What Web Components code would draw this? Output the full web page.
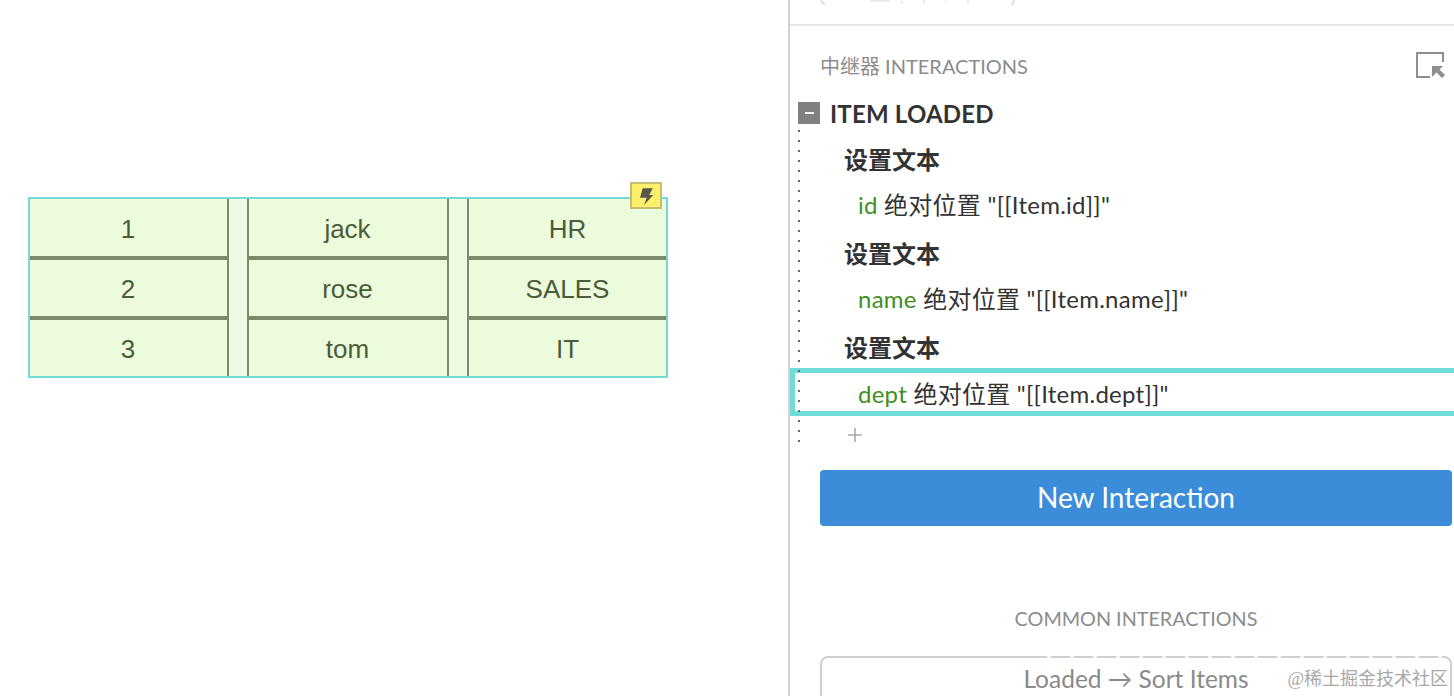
<!DOCTYPE html>
<html><head><meta charset="utf-8"><style>
html,body{margin:0;padding:0;background:#fff;width:1454px;height:696px;overflow:hidden}
body{display:flex;font-family:Lato,"Noto Sans CJK SC",sans-serif}
</style></head><body>
<canvas-pane>
  <repeater-grid>
    <grid-spacer style="grid-column:2"></grid-spacer><grid-spacer style="grid-column:4"></grid-spacer>
    <grid-cell>1</grid-cell><grid-cell>jack</grid-cell><grid-cell end>HR</grid-cell>
    <grid-cell>2</grid-cell><grid-cell>rose</grid-cell><grid-cell end>SALES</grid-cell>
    <grid-cell last>3</grid-cell><grid-cell last>tom</grid-cell><grid-cell last end>IT</grid-cell>
  </repeater-grid>
</canvas-pane>
<side-panel>
  <panel-top></panel-top>
  <panel-heading>中继器 INTERACTIONS</panel-heading>
  <event-title>ITEM LOADED</event-title>
  <tree-body>
    <tree-action>设置文本</tree-action>
    <tree-target><span slot="name">id</span> 绝对位置 "[[Item.id]]"</tree-target>
    <tree-action>设置文本</tree-action>
    <tree-target><span slot="name">name</span> 绝对位置 "[[Item.name]]"</tree-target>
    <tree-action>设置文本</tree-action>
    <tree-target selected><span slot="name">dept</span> 绝对位置 "[[Item.dept]]"</tree-target>
    <tree-add></tree-add>
  </tree-body>
  <primary-button>New Interaction</primary-button>
  <common-label>COMMON INTERACTIONS</common-label>
  <outline-button>Loaded → Sort Items<span slot="mark">@稀土掘金技术社区</span></outline-button>
</side-panel>
<script>
function def(name, css, html){
  customElements.define(name, class extends HTMLElement{
    constructor(){super();const s=this.attachShadow({mode:'open'});s.innerHTML='<style>'+css+'</style>'+html;}
  });
}
def('canvas-pane',`:host{display:block;width:788px;height:696px;flex:none;padding:197px 0 0 28px;box-sizing:border-box}`,`<slot></slot>`);
def('repeater-grid',`:host{display:block;position:relative;width:640px;height:181px;box-sizing:border-box;border:2px solid #74dcd5;background:#ebfbdb}
.g{display:grid;grid-template-columns:197px 22px 198px 22px 197px;grid-template-rows:61px 60px 56px;height:100%}
.badge{position:absolute;top:-17px;left:600px;width:32px;height:27px;display:block}`,
`<div class="g"><slot></slot></div><svg class="badge" viewBox="0 0 32 27"><rect x="1" y="1" width="30" height="25" fill="#fdf06a" stroke="#c4bd72" stroke-width="2"/><path d="M12.7 6.3H22.7L19.3 13H23.3L14 23L16.7 15.7H10Z" fill="#56564a"/></svg>`);
def('grid-cell',`:host{display:flex;align-items:center;justify-content:center;font:26px "Liberation Sans",sans-serif;color:#4a5c3a;box-sizing:border-box;border-bottom:4px solid #7b8a69;padding:3px 1px 0 0}
:host([last]){border-bottom:0}:host([end]){padding-right:0}`,`<slot></slot>`);
def('grid-spacer',`:host{display:block;grid-row:1/4;box-sizing:border-box;border-left:2px solid #7b8a69;border-right:2px solid #7b8a69;background:#eef9e2}`,``);
def('side-panel',`:host{display:flex;flex-direction:column;flex:1;border-left:2px solid #d2d2d2;height:696px;box-sizing:border-box;min-width:0;overflow:hidden}`,`<slot></slot>`);
def('panel-top',`:host{display:block;height:26px;box-sizing:border-box;border-bottom:2px solid #e6e6e6;flex:none}svg{display:block}`,
`<svg width="664" height="6" viewBox="0 0 664 6" fill="none" stroke="#dedede" stroke-width="2"><path d="M31 0Q32 3 35 5M224 0Q224 3 221 5"/><path d="M80 1H100M112 1V4M134 0V4M156 1V3M178 0V4" stroke="#eaeaea"/></svg>`);
def('panel-heading',`:host{display:flex;align-items:center;justify-content:space-between;flex:none;height:26px;margin-top:26px;padding:0 8px 0 30px;color:#8c8c8c;font-size:20px}
svg{display:block}`,
`<span><slot></slot></span><svg width="30" height="26" viewBox="0 0 30 26"><path d="M27 10V1H1V25H14" fill="none" stroke="#8f8f8f" stroke-width="2"/><path d="M16 14H27L23.5 17.5L29 23L26 26L20.5 20.5L16 25Z" fill="#8f8f8f"/></svg>`);
def('event-title',`:host{display:flex;align-items:center;gap:10px;flex:none;height:22px;margin-top:24px;padding-left:8px;color:#333;font-weight:700;font-size:24px;letter-spacing:.2px}
i{display:flex;align-items:center;justify-content:center;width:22px;height:22px;background:#808080}i::after{content:"";width:9px;height:2px;background:#fff}`,`<i></i><slot></slot>`);
def('tree-body',`:host{display:block;position:relative;flex:none;height:327px;box-sizing:border-box;padding-top:13px;color:#333}
:host::before{content:"";position:absolute;left:8px;top:6px;width:2px;height:315px;background:linear-gradient(#666 2px,transparent 2px) 0 0/2px 10px repeat-y}`,`<slot></slot>`);
def('tree-action',`:host{display:flex;align-items:center;box-sizing:border-box;height:46px;padding:0 0 4px 54px;font-weight:700;font-size:24px;color:#333}`,`<slot></slot>`);
def('tree-target',`:host{display:block;box-sizing:border-box;height:48px;line-height:44px;padding-left:68px;font-size:24px;letter-spacing:.25px;color:#333;white-space:pre}
:host([selected]){margin:-3px -12px 3px 0;border:5px solid #6edcd8;padding-left:63px;line-height:42px}
::slotted([slot=name]){color:#3f8f1f}`,`<slot name="name"></slot><slot></slot>`);
def('tree-add',`:host{display:flex;align-items:center;height:32px;padding-left:58px}svg{display:block}`,`<svg width="14" height="14" viewBox="0 0 14 14"><path d="M7 0V14M0 7H14" stroke="#aaa" stroke-width="1.6" fill="none"/></svg>`);
def('primary-button',`:host{display:flex;align-items:center;justify-content:center;flex:none;box-sizing:border-box;height:56px;margin:19px 2px 0 30px;padding-bottom:2px;border-radius:4px;background:#3b8dd9;color:#fff;font-size:28px}`,`<slot></slot>`);
def('common-label',`:host{display:block;flex:none;height:24px;line-height:22px;margin:81px 2px 0 30px;text-align:center;color:#8c8c8c;font-size:19.8px}`,`<slot></slot>`);
def('outline-button',`:host{display:block;position:relative;flex:none;box-sizing:border-box;height:60px;margin:25px 2px 0 30px;border:2px solid #cfcfcf;border-radius:8px;text-align:center;color:#8a8a8a;font-size:24.5px;line-height:42px}
.dash{position:absolute;left:206px;right:6px;top:-2px;height:2px;background:repeating-linear-gradient(90deg,transparent 0 19px,#f4f4f4 19px 23px)}
.mark{position:absolute;right:2px;top:0;font:18px/43px "Liberation Serif","Noto Sans CJK SC",serif;color:#a8a8a8;white-space:nowrap}`,
`<slot></slot><div class="dash"></div><div class="mark"><slot name="mark"></slot></div>`);
</script>
</body></html>
